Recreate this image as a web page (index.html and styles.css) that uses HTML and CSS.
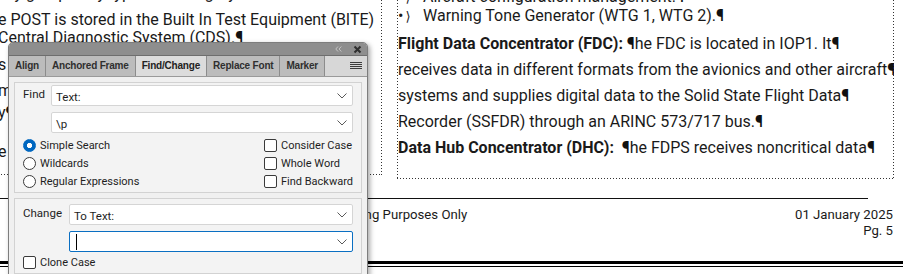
FILE: index.html
```html
<!DOCTYPE html>
<html lang="en">
<head>
    <meta charset="UTF-8">
    <meta name="viewport" content="width=device-width, initial-scale=1.0">
    <title>Find/Change</title>
    <link rel="stylesheet" href="styles.css">
</head>
<body>
    <div class="page">
        <div class="cols">
            <div class="frame frame-left">
                <div class="para tight top-line">
                    <div class="ln">ally grouped by type and category.</div>
                </div>
                <div class="para tight second-gap">
                    <div class="ln">e POST is stored in the Built In Test Equipment (BITE)</div>
                    <div class="ln">Central Diagnostic System (CDS).<span class="pm">¶</span></div>
                </div>
                <div class="para wide first-gap">
                    <div class="ln">s and monitors the aircraft functions</div>
                    <div class="ln">maintenance data and fault history.</div>
                </div>
                <div class="para tight">
                    <div class="ln">y<span class="pm">¶</span></div>
                </div>
                <div class="para wide last-gap">
                    <div class="ln">e</div>
                </div>
            </div>

            <div class="frame frame-right">
                <div class="bullet"><span class="mark">•<span class="chev">⟩</span></span>Aircraft configuration management.<span class="pm">¶</span></div>
                <div class="bullet"><span class="mark">•<span class="chev">⟩</span></span>Warning Tone Generator (WTG 1, WTG 2).<span class="pm">¶</span></div>
                <div class="para wide body-gap">
                    <div class="ln"><b>Flight Data Concentrator (FDC):</b> <span class="pm">¶</span>he FDC is located in IOP1. It<span class="pm">¶</span></div>
                    <div class="ln">receives data in different formats from the avionics and other aircraft<span class="pm">¶</span></div>
                    <div class="ln">systems and supplies digital data to the Solid State Flight Data<span class="pm">¶</span></div>
                    <div class="ln">Recorder (SSFDR) through an ARINC 573/717 bus.<span class="pm">¶</span></div>
                    <div class="ln"><b>Data Hub Concentrator (DHC):</b> &nbsp;<span class="pm">¶</span>he FDPS receives noncritical data<span class="pm">¶</span></div>
                </div>
            </div>
        </div>

        <div class="footer-rule"></div>
        <div class="footer">
            <div class="footer-left">For Training Purposes Only</div>
            <div class="footer-right">
                <div>01 January 2025</div>
                <div>Pg. 5</div>
            </div>
        </div>
        <div class="double-rule"></div>
    </div>

    <!-- floating Find/Change panel -->
    <div class="panel">
        <div class="titlebar">
            <svg class="collapse" width="7" height="6" viewBox="0 0 7 6">
                <path d="M3 0.5 L0.8 3 L3 5.5 M6.3 0.5 L4.1 3 L6.3 5.5" fill="none" stroke="#c4c4c4" stroke-width="1"/>
            </svg>
            <svg class="close" width="9" height="9" viewBox="0 0 9 9">
                <path d="M1.5 1.5 L7.5 7.5 M7.5 1.5 L1.5 7.5" stroke="#2e2e2e" stroke-width="2"/>
            </svg>
        </div>
        <div class="tabs">
            <div class="tab">Align</div>
            <div class="tab">Anchored Frame</div>
            <div class="tab active">Find/Change</div>
            <div class="tab">Replace Font</div>
            <div class="tab">Marker</div>
            <div class="tab-fill">
                <svg width="12" height="8" viewBox="0 0 12 8">
                    <path d="M0 0.5 H12 M0 2.5 H12 M0 4.5 H12 M0 6.5 H12" stroke="#3c3c3c" stroke-width="1"/>
                </svg>
            </div>
        </div>

        <div class="panel-body">
            <div class="group find-group">
                <div class="row">
                    <div class="label">Find</div>
                    <div class="fields">
                        <div class="select">
                            <span>Text:</span>
                            <svg class="arrow" width="10" height="6" viewBox="0 0 10 6"><path d="M0.5 0.5 L5 5 L9.5 0.5" fill="none" stroke="#5a5a5a" stroke-width="1"/></svg>
                        </div>
                        <div class="select">
                            <span>\p</span>
                            <svg class="arrow" width="10" height="6" viewBox="0 0 10 6"><path d="M0.5 0.5 L5 5 L9.5 0.5" fill="none" stroke="#5a5a5a" stroke-width="1"/></svg>
                        </div>
                    </div>
                </div>
                <div class="options">
                    <div class="opt-col">
                        <label class="opt"><span class="radio checked"></span>Simple Search</label>
                        <label class="opt"><span class="radio"></span>Wildcards</label>
                        <label class="opt"><span class="radio"></span>Regular Expressions</label>
                    </div>
                    <div class="opt-col">
                        <label class="opt"><span class="check"></span>Consider Case</label>
                        <label class="opt"><span class="check"></span>Whole Word</label>
                        <label class="opt"><span class="check"></span>Find Backward</label>
                    </div>
                </div>
            </div>

            <div class="group change-group">
                <div class="row">
                    <div class="label">Change</div>
                    <div class="fields">
                        <div class="select">
                            <span>To Text:</span>
                            <svg class="arrow" width="10" height="6" viewBox="0 0 10 6"><path d="M0.5 0.5 L5 5 L9.5 0.5" fill="none" stroke="#5a5a5a" stroke-width="1"/></svg>
                        </div>
                        <div class="select focused">
                            <span class="caret"></span>
                            <svg class="arrow" width="10" height="6" viewBox="0 0 10 6"><path d="M0.5 0.5 L5 5 L9.5 0.5" fill="none" stroke="#5a5a5a" stroke-width="1"/></svg>
                        </div>
                    </div>
                </div>
                <label class="opt"><span class="check"></span>Clone Case</label>
            </div>
        </div>
    </div>
</body>
</html>
```

FILE: styles.css
```css
body {
    margin: 0;
    width: 903px;
    height: 274px;
    overflow: hidden;
    background: #ffffff;
    font-family: Roboto, "Liberation Sans", sans-serif;
    color: #1a1a1a;
    position: relative;
}

.page {
    width: 903px;
}

.cols {
    display: flex;
    align-items: flex-start;
    margin-top: -12px;
}

.frame {
    font-size: 16px;
    white-space: nowrap;
    overflow: hidden;
}

.frame-left {
    width: 384px;
    margin-left: -2px;
    padding-bottom: 10px;
    background:
        repeating-linear-gradient(to bottom, #333 0 1px, transparent 1px 3px) right top / 1px 100% no-repeat,
        repeating-linear-gradient(to right, #333 0 1px, transparent 1px 3px) left bottom / 100% 1px no-repeat;
}

.frame-right {
    width: 496px;
    margin-left: 15px;
    padding-left: 1px;
    padding-bottom: 18px;
    background:
        repeating-linear-gradient(to bottom, #333 0 1px, transparent 1px 3px) left top / 1px 100% no-repeat,
        repeating-linear-gradient(to bottom, #333 0 1px, transparent 1px 3px) right top / 1px 100% no-repeat,
        repeating-linear-gradient(to right, #333 0 1px, transparent 1px 3px) left bottom / 100% 1px no-repeat;
}

.para.tight .ln {
    line-height: 18px;
}

.para.wide .ln {
    line-height: 26px;
}

.top-line {
    margin-top: -3px;
}

.second-gap {
    margin-top: 8px;
}

.first-gap {
    margin-top: 5px;
}

.last-gap {
    margin-top: 17px;
}

.body-gap {
    margin-top: 5px;
}

.bullet {
    line-height: 18px;
}

.mark {
    display: inline-block;
    width: 25px;
}

.chev {
    font-family: "DejaVu Sans", sans-serif;
    font-size: 13px;
    margin-left: 2px;
}

.pm {
    font-weight: 700;
    color: #111;
}

b {
    font-weight: 700;
}

.footer-rule {
    width: 868px;
    height: 1px;
    margin-top: 19px;
    background: #111;
}

.footer {
    display: flex;
    justify-content: space-between;
    margin-top: 8px;
    font-size: 13.2px;
    line-height: 16px;
}

.footer-left {
    margin-left: 310px;
}

.footer-right {
    text-align: right;
    padding-right: 10px;
}

.double-rule {
    margin-top: 22px;
    height: 2px;
    border-top: 3px solid #000;
    border-bottom: 1px solid #000;
}

/* Find/Change panel */
.panel {
    position: absolute;
    left: 8px;
    top: 42px;
    width: 358px;
    height: 250px;
    background: #f0f0f0;
    border: 1px solid #7d7d7d;
    border-radius: 5px 5px 0 0;
    box-shadow: 2px 2px 5px rgba(0, 0, 0, 0.35);
    overflow: hidden;
}

.titlebar {
    height: 12px;
    background: #8e8e8e;
    display: flex;
    justify-content: flex-end;
    align-items: center;
    padding-right: 5px;
}

.collapse {
    margin-right: 11px;
}

.tabs {
    display: flex;
    height: 20px;
    background: #b8b8b8;
    border-top: 1px solid #6e6e6e;
    border-bottom: 1px solid #9a9a9a;
}

.tab {
    font-family: "Liberation Sans", sans-serif;
    font-weight: 700;
    font-size: 10px;
    letter-spacing: -0.2px;
    color: #2f2f2f;
    line-height: 20px;
    padding: 0 6px 0 6px;
    border-right: 1px solid #8c8c8c;
    background: #bcbcbc;
}

.tab.active {
    background: #dcdcdc;
    color: #222;
}

.tab-fill {
    flex: 1;
    background: #d7d7d7;
    display: flex;
    justify-content: flex-end;
    align-items: center;
    padding-right: 5px;
}

.panel-body {
    padding: 5px 5px 0;
    font-family: Roboto, "Liberation Sans", sans-serif;
    font-size: 11px;
    color: #1e1e1e;
}

.group {
    border: 1px solid #d2d2d2;
    background: #f3f3f3;
    padding: 2px 8px 2px 8px;
}

.change-group {
    margin-top: 5px;
    padding-top: 5px;
}

.row {
    display: flex;
}

.find-group .label {
    width: 28px;
}

.change-group .label {
    width: 46px;
}

.label {
    font-size: 11.5px;
    padding-top: 2px;
}

.fields {
    flex: 1;
    display: flex;
    flex-direction: column;
    gap: 6px;
}

.select {
    height: 19px;
    background: #fff;
    border: 1px solid #d5d5d5;
    border-radius: 2px;
    display: flex;
    align-items: center;
    justify-content: space-between;
    padding: 0 5px 0 4px;
    font-size: 11.5px;
}

.select span {
    padding-top: 3px;
}

.select.focused {
    border-color: #0a6fc2;
}

.caret {
    width: 1px;
    height: 13px;
    background: #000;
    margin-left: 2px;
}

.select .arrow {
    flex-shrink: 0;
}

.options {
    display: grid;
    grid-template-columns: 241px auto;
    margin-top: 3px;
}

.opt-col {
    display: flex;
    flex-direction: column;
}

.opt {
    display: flex;
    align-items: center;
    gap: 4px;
    height: 18px;
    font-size: 11px;
    white-space: nowrap;
}

.radio {
    width: 11px;
    height: 11px;
    border: 1px solid #3a3a3a;
    border-radius: 50%;
    background: #fff;
}

.radio.checked {
    border: 1px solid #0067c0;
    background: radial-gradient(circle, #fff 0 2.4px, #0067c0 2.9px);
}

.check {
    width: 11px;
    height: 11px;
    border: 1px solid #3a3a3a;
    border-radius: 2px;
    background: #fff;
}

.change-group > .opt {
    margin-top: 1px;
}
```
